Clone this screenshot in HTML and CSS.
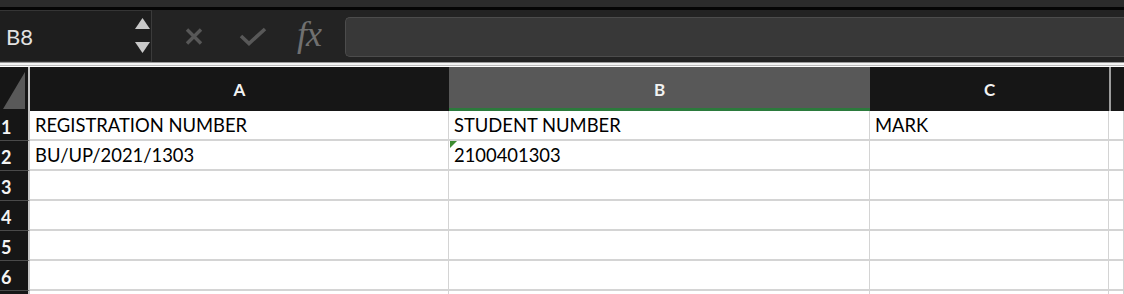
FILE: index.html
```html
<!DOCTYPE html>
<html>
<head>
<meta charset="utf-8">
<link rel="stylesheet" href="styles.css">
</head>
<body>
<div class="app">
  <div class="topstrip"></div>
  <div class="toolbar">
    <div class="namebox">
      <span class="ref">B8</span>
      <div class="spin">
        <svg width="15" height="12" viewBox="0 0 15 12"><polygon points="7.5,0 15,11 0,11" fill="#c8c8c8"/></svg>
        <svg width="15" height="12" viewBox="0 0 15 12"><polygon points="0,0 15,0 7.5,11" fill="#c8c8c8"/></svg>
      </div>
    </div>
    <div class="tools">
      <svg class="ico-x" width="20" height="19" viewBox="0 0 20 19"><path d="M3 2.5 L17 16.5 M17 2.5 L3 16.5" stroke="#575757" stroke-width="3.4" stroke-linecap="butt"/></svg>
      <svg class="ico-ok" width="28" height="19" viewBox="0 0 28 19"><path d="M2 9 L10 16.5 L26 2" stroke="#585858" stroke-width="3.6" fill="none"/></svg>
      <span class="fx">fx</span>
    </div>
    <div class="formula"></div>
  </div>
  <div class="divider"></div>
  <div class="sheet">
    <div class="corner"><span class="tri"></span></div>
    <div class="colhead">A</div>
    <div class="colhead sel">B</div>
    <div class="colhead">C</div>
    <div class="colhead last"></div>

    <div class="rowhead">1</div>
    <div class="cell">REGISTRATION NUMBER</div>
    <div class="cell">STUDENT NUMBER</div>
    <div class="cell">MARK</div>
    <div class="cell"></div>

    <div class="rowhead">2</div>
    <div class="cell">BU/UP/2021/1303</div>
    <div class="cell flag">2100401303</div>
    <div class="cell"></div>
    <div class="cell"></div>

    <div class="rowhead">3</div>
    <div class="cell"></div><div class="cell"></div><div class="cell"></div><div class="cell"></div>

    <div class="rowhead">4</div>
    <div class="cell"></div><div class="cell"></div><div class="cell"></div><div class="cell"></div>

    <div class="rowhead">5</div>
    <div class="cell"></div><div class="cell"></div><div class="cell"></div><div class="cell"></div>

    <div class="rowhead">6</div>
    <div class="cell"></div><div class="cell"></div><div class="cell"></div><div class="cell"></div>

    <div class="rowhead"></div>
    <div class="cell"></div><div class="cell"></div><div class="cell"></div><div class="cell"></div>
  </div>
</div>
</body>
</html>
```

FILE: styles.css
```css
html, body {
  margin: 0;
  padding: 0;
  background: #ffffff;
  overflow: hidden;
}

.app {
  width: 1124px;
  height: 294px;
  overflow: hidden;
  font-family: Lato, "Open Sans", sans-serif;
}

.topstrip {
  height: 7px;
  background: #2b2b2b;
  border-bottom: 3px solid #050505;
}

.toolbar {
  height: 52px;
  background: #232323;
  display: flex;
  align-items: stretch;
}

.namebox {
  width: 152px;
  box-sizing: border-box;
  background: #1e1e1e;
  border-top: 1px solid #353535;
  border-bottom: 1px solid #353535;
  border-right: 1px solid #3b3b3b;
  display: flex;
  align-items: center;
  justify-content: space-between;
  padding: 0 1px 0 6px;
}

.ref {
  color: #e2e2e2;
  font-size: 22px;
  line-height: 1;
  margin-top: 1px;
}

.spin {
  display: flex;
  flex-direction: column;
  gap: 12px;
}

.spin svg {
  display: block;
}

.tools {
  display: flex;
  align-items: center;
  padding-left: 32px;
  width: 193px;
  box-sizing: border-box;
}

.ico-x {
  margin-top: 1px;
}

.ico-ok {
  margin-left: 35px;
  margin-top: 1px;
}

.fx {
  margin-left: 30px;
  font-family: "Liberation Serif", serif;
  font-style: italic;
  font-size: 36px;
  color: #707070;
  line-height: 1;
  margin-top: -4px;
  letter-spacing: -1px;
}

.formula {
  flex: 1;
  margin: 7px 0 5px 0;
  background: #383838;
  border: 1px solid #4c4c4c;
  border-right: none;
  border-radius: 5px 0 0 5px;
}

.divider {
  height: 1px;
  background: #9a9a9a;
  border-bottom: 2px solid #f4f4f4;
  box-shadow: 0 1px 0 #bcbcbc;
  margin-bottom: 2px;
}

.sheet {
  display: grid;
  grid-template-columns: 30px 419px 421px 239px 1fr;
  grid-template-rows: 44px repeat(7, 30px);
}

.corner {
  background: #161616;
  border-right: 2px solid #c6c6c6;
  position: relative;
}

.tri {
  position: absolute;
  right: 3px;
  bottom: 2px;
  width: 0;
  height: 0;
  border-style: solid;
  border-width: 0 0 37px 22px;
  border-color: transparent transparent #595959 transparent;
}

.colhead {
  background: #161616;
  color: #f2f2f2;
  font-size: 17px;
  font-weight: 700;
  display: flex;
  align-items: center;
  justify-content: center;
}

.colhead.sel {
  background: #585858;
  border-bottom: 3px solid #2b7a3c;
  padding-top: 3px;
}

.colhead.last {
  border-left: 2px solid #9c9c9c;
}

.rowhead {
  background: #161616;
  border-right: 2px solid #c6c6c6;
  border-bottom: 1px solid #4a4a4a;
  color: #f4f4f4;
  font-size: 18px;
  font-weight: 700;
  padding-left: 1px;
  display: flex;
  align-items: flex-end;
  padding-bottom: 4px;
  box-sizing: border-box;
  line-height: 1;
}

.cell {
  background: #ffffff;
  border-right: 1px solid #d4d4d4;
  border-bottom: 2px solid #d4d4d4;
  color: #000000;
  font-size: 18.4px;
  line-height: 1;
  padding-left: 5px;
  padding-bottom: 5px;
  display: flex;
  align-items: flex-end;
  box-sizing: border-box;
  white-space: nowrap;
  position: relative;
}

.cell.flag::before {
  content: "";
  position: absolute;
  left: 1px;
  top: 0;
  width: 0;
  height: 0;
  border-style: solid;
  border-width: 7px 7px 0 0;
  border-color: #3d8b2f transparent transparent transparent;
}
```
